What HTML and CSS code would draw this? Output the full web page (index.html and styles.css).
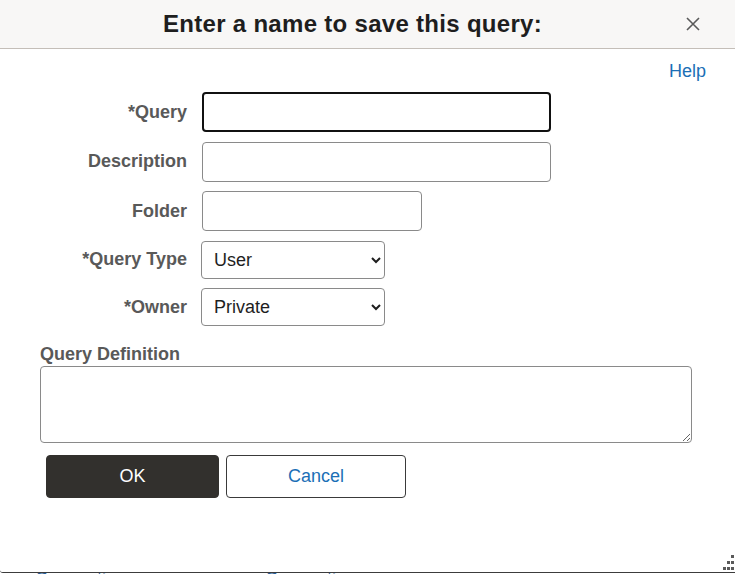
FILE: index.html
```html
<!DOCTYPE html>
<html>
<head>
<meta charset="utf-8">
<link rel="stylesheet" href="styles.css">
</head>
<body>
<div class="dialog">
  <div class="header">
    <h1 class="title">Enter a name to save this query:</h1>
    <button class="close" aria-label="Close">
      <svg width="14" height="14" viewBox="0 0 14 14"><path d="M1 1L13 13M13 1L1 13" stroke="#5a5a5a" stroke-width="1.6" fill="none"/></svg>
    </button>
  </div>
  <div class="help-row"><a class="link" href="#">Help</a></div>
  <div class="form">
    <label class="label">*Query</label>
    <input class="field field-focus field-wide" type="text">
    <label class="label">Description</label>
    <input class="field field-wide" type="text">
    <label class="label">Folder</label>
    <input class="field field-mid" type="text">
    <label class="label">*Query Type</label>
    <select class="dropdown"><option>User</option></select>
    <label class="label">*Owner</label>
    <select class="dropdown"><option>Private</option></select>
  </div>
  <div class="def-label">Query Definition</div>
  <textarea class="def-area"></textarea>
  <div class="buttons">
    <button class="btn btn-primary">OK</button>
    <button class="btn btn-secondary">Cancel</button>
  </div>
  <div class="grip">
    <span class="dot d1"></span>
    <span class="dot d2"></span><span class="dot d3"></span>
    <span class="dot d4"></span><span class="dot d5"></span><span class="dot d6"></span>
  </div>
</div>
<div class="underlay"><span class="under-text t1">Connections</span><span class="under-text t2">Connection</span></div>
</body>
</html>
```
FILE: styles.css
```css
* { box-sizing: border-box; }
html, body { margin: 0; padding: 0; background: #ffffff; }
body { font-family: "Liberation Sans", Arial, sans-serif; width: 735px; height: 575px; overflow: hidden; }

.dialog {
  position: relative;
  height: 573px;
  background: #ffffff;
  border-bottom: 1px solid #3c3c3c;
  border-bottom-left-radius: 3px;
  display: flex;
  flex-direction: column;
}

.header {
  height: 49px;
  flex: none;
  background: #f8f7f6;
  border-bottom: 1px solid #c4beb8;
  display: flex;
  align-items: center;
  padding: 0 35px 0 0;
}
.title {
  flex: 1;
  margin: 0;
  padding-left: 19px;
  text-align: center;
  font-size: 24px;
  letter-spacing: 0.3px;
  font-weight: bold;
  color: #1e1e1e;
  line-height: 28px;
}
.close {
  width: 14px;
  height: 14px;
  padding: 0;
  border: 0;
  background: transparent;
  display: flex;
}

.help-row {
  display: flex;
  justify-content: flex-end;
  padding: 12px 29px 0 0;
}
.link {
  font-size: 18px;
  line-height: 21px;
  color: #1b6fb6;
  text-decoration: none;
}

.form {
  margin-top: 10px;
  display: grid;
  grid-template-columns: 187px auto;
  column-gap: 15px;
  row-gap: 9.5px;
  align-items: center;
  justify-items: start;
}
.label {
  justify-self: end;
  font-size: 18px;
  font-weight: bold;
  color: #595959;
  line-height: 21px;
}
.field {
  height: 40px;
  border: 1px solid #8a8a8a;
  border-radius: 4px;
  background: #fff;
  font-family: "Liberation Sans", Arial, sans-serif;
  font-size: 18px;
  padding: 0 10px;
  margin: 0;
}
.field-focus {
  border: 2px solid #111111;
  outline: none;
}
.field-wide { width: 349px; }
.field-mid { width: 220px; }
.dropdown {
  width: 184px;
  height: 38px;
  margin: 0 0 0 -1px;
  border: 1px solid #8a8a8a;
  border-radius: 4px;
  background: #fff;
  color: #1e1e1e;
  font-family: "Liberation Sans", Arial, sans-serif;
  font-size: 18px;
  padding: 0 0 0 8px;
}

.def-label {
  margin: 18px 0 1px 40px;
  font-size: 18px;
  font-weight: bold;
  color: #595959;
  line-height: 21px;
}
.def-area {
  display: block;
  margin: 0 0 0 40px;
  width: 652px;
  height: 77px;
  border: 1px solid #8a8a8a;
  border-radius: 4px;
  background: #fff;
  font-family: "Liberation Sans", Arial, sans-serif;
  font-size: 16px;
  padding: 4px 8px;
}

.buttons {
  display: flex;
  gap: 7px;
  margin: 12px 0 0 46px;
}
.btn {
  height: 43px;
  border-radius: 4px;
  font-family: "Liberation Sans", Arial, sans-serif;
  font-size: 18px;
  padding: 0;
  margin: 0;
}
.btn-primary {
  width: 173px;
  background: #32302d;
  border: 1px solid #32302d;
  color: #ffffff;
}
.btn-secondary {
  width: 180px;
  background: #ffffff;
  border: 1px solid #3a3a3a;
  color: #1b6fb6;
}

.grip {
  position: absolute;
  right: 0;
  bottom: 1px;
  width: 14px;
  height: 17px;
}
.dot {
  position: absolute;
  width: 3px;
  height: 3px;
  background: #5a5a5a;
}
.d1 { right: 1px; top: 1px; }
.d2 { right: 5px; top: 7px; }
.d3 { right: 1px; top: 7px; }
.d4 { right: 9px; top: 13px; }
.d5 { right: 5px; top: 13px; }
.d6 { right: 1px; top: 13px; }

.underlay {
  height: 1px;
  overflow: hidden;
  background: #ffffff;
  display: flex;
  white-space: nowrap;
}
.under-text {
  font-size: 18px;
  line-height: 12px;
  color: #2a5f9a;
}
.t1 { margin-left: 35px; }
.t2 { margin-left: 130px; }
```
